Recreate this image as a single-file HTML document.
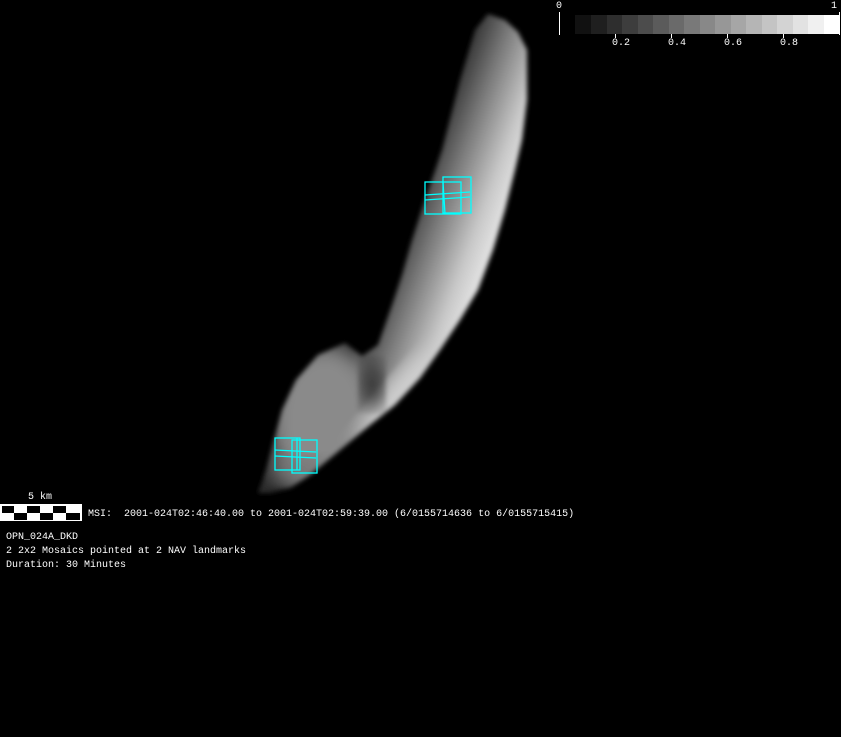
<!DOCTYPE html>
<html><head><style>
html,body{margin:0;padding:0;background:#000;}
body{width:841px;height:737px;position:relative;overflow:hidden;font-family:"Liberation Mono",monospace;font-size:10px;color:#fff;}
.t{position:absolute;white-space:pre;line-height:12px;}
</style></head><body>
<svg width="841" height="737" style="position:absolute;left:0;top:0">
<defs>
<linearGradient id="g" gradientUnits="userSpaceOnUse" x1="410" y1="190" x2="505" y2="225">
<stop offset="0" stop-color="#2a2a2a"/>
<stop offset="0.35" stop-color="#777"/>
<stop offset="0.75" stop-color="#c8c8c8"/>
<stop offset="1" stop-color="#e8e8e8"/>
</linearGradient>
<clipPath id="c"><polygon points="488,14 505,20 518,32 527,50 527,100 522,140 515,170 505,210 493,250 478,290 460,320 440,350 420,378 395,405 370,425 340,450 310,475 290,488 270,493 258,493 266,470 274,440 282,410 296,380 318,355 345,343 362,356 378,345 392,305 402,275 412,240 425,200 442,150 460,80 475,30"/></clipPath>
<filter id="b"><feGaussianBlur stdDeviation="2.5"/></filter>
<filter id="b2"><feGaussianBlur stdDeviation="10"/></filter>
</defs>
<g filter="url(#b)">
<g clip-path="url(#c)">
<rect x="250" y="0" width="300" height="500" fill="url(#g)"/>
<ellipse cx="325" cy="420" rx="55" ry="75" fill="#8a8a8a" filter="url(#b2)"/>
<ellipse cx="400" cy="400" rx="20" ry="60" fill="#cfcfcf" filter="url(#b2)" transform="rotate(40 400 400)"/>
<ellipse cx="372" cy="385" rx="12" ry="24" fill="#2a2a2a" filter="url(#b2)"/>
<ellipse cx="300" cy="470" rx="30" ry="14" fill="#777" filter="url(#b2)"/>
</g>
</g>
<g fill="none" stroke="#00ffff" stroke-width="1.3">
<rect x="425" y="182" width="36" height="32"/>
<rect x="443" y="177" width="28" height="36"/>
<line x1="425" y1="195" x2="470" y2="192"/>
<line x1="425" y1="200" x2="470" y2="197"/>
<line x1="443" y1="182" x2="445" y2="214"/>
<rect x="275" y="438" width="25" height="32"/>
<rect x="292" y="440" width="25" height="33"/>
<line x1="275" y1="450" x2="316" y2="452"/>
<line x1="275" y1="456" x2="316" y2="458"/>
<line x1="297" y1="438" x2="297" y2="470"/>
</g>
<g>
<rect x="575" y="15" width="16" height="19" fill="#111"/>
<rect x="591" y="15" width="16" height="19" fill="#1f1f1f"/>
<rect x="607" y="15" width="16" height="19" fill="#2e2e2e"/>
<rect x="622" y="15" width="16" height="19" fill="#3d3d3d"/>
<rect x="638" y="15" width="16" height="19" fill="#4c4c4c"/>
<rect x="653" y="15" width="16" height="19" fill="#5b5b5b"/>
<rect x="669" y="15" width="16" height="19" fill="#6a6a6a"/>
<rect x="684" y="15" width="16" height="19" fill="#797979"/>
<rect x="700" y="15" width="16" height="19" fill="#888"/>
<rect x="715" y="15" width="16" height="19" fill="#979797"/>
<rect x="731" y="15" width="16" height="19" fill="#a6a6a6"/>
<rect x="746" y="15" width="16" height="19" fill="#b5b5b5"/>
<rect x="762" y="15" width="16" height="19" fill="#c4c4c4"/>
<rect x="777" y="15" width="16" height="19" fill="#d3d3d3"/>
<rect x="793" y="15" width="16" height="19" fill="#e2e2e2"/>
<rect x="808" y="15" width="16" height="19" fill="#f0f0f0"/>
<rect x="824" y="15" width="15" height="19" fill="#fff"/>
</g>
<g stroke="#fff" stroke-width="1">
<line x1="559.5" y1="12" x2="559.5" y2="35"/>
<line x1="839.5" y1="12" x2="839.5" y2="35"/>
<line x1="615.5" y1="34" x2="615.5" y2="38"/>
<line x1="671.5" y1="34" x2="671.5" y2="38"/>
<line x1="727.5" y1="34" x2="727.5" y2="38"/>
<line x1="783.5" y1="34" x2="783.5" y2="38"/>
</g>
<rect x="0" y="504" width="82" height="17" fill="#fff"/>
<g fill="#000">
<rect x="2" y="506" width="12" height="7"/><rect x="27" y="506" width="13" height="7"/><rect x="53" y="506" width="13" height="7"/>
<rect x="14" y="513" width="13" height="7"/><rect x="40" y="513" width="13" height="7"/><rect x="66" y="513" width="14" height="7"/>
</g>
</svg>
<div class="t" style="left:556px;top:1px">0</div>
<div class="t" style="left:831px;top:1px">1</div>
<div class="t" style="left:612px;top:38px">0.2</div>
<div class="t" style="left:668px;top:38px">0.4</div>
<div class="t" style="left:724px;top:38px">0.6</div>
<div class="t" style="left:780px;top:38px">0.8</div>
<div class="t" style="left:28px;top:492px">5 km</div>
<div class="t" style="left:88px;top:509px">MSI:  2001-024T02:46:40.00 to 2001-024T02:59:39.00 (6/0155714636 to 6/0155715415)</div>
<div class="t" style="left:6px;top:532px">OPN_024A_DKD</div>
<div class="t" style="left:6px;top:546px">2 2x2 Mosaics pointed at 2 NAV landmarks</div>
<div class="t" style="left:6px;top:560px">Duration: 30 Minutes</div>
</body></html>
